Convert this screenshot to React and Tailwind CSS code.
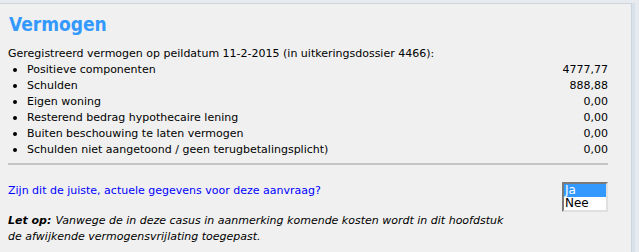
export default function App() {
  const items = [
    ['Positieve componenten', '4777,77'],
    ['Schulden', '888,88'],
    ['Eigen woning', '0,00'],
    ['Resterend bedrag hypothecaire lening', '0,00'],
    ['Buiten beschouwing te laten vermogen', '0,00'],
    ['Schulden niet aangetoond / geen terugbetalingsplicht)', '0,00'],
  ];

  return (
    <div className="w-[639px] h-[252px] bg-[#e7ebef] pt-[3px] overflow-hidden font-['DejaVu_Sans',Verdana,sans-serif] text-[11px] text-black">
      <div className="w-[635px] h-[260px] border-r-[3px] border-r-[#d9e2ea]">
        <div className="w-[632px] h-full bg-[#f0f0f0] border-t border-r border-[#cdd6df] pl-[8px] pr-[23px]">
          <h1 className="font-['DejaVu_Sans_Condensed','DejaVu_Sans',sans-serif] text-[19px] leading-[24px] font-bold text-[#3399ff] pt-[8px] pl-[1px]">Vermogen</h1>

          <div className="mt-[10px] leading-[16px]">
            Geregistreerd vermogen op peildatum 11-2-2015 (in uitkeringsdossier 4466):
          </div>
          <ul className="leading-[16px]">
            {items.map(([label, value]) => (
              <li key={label} className="flex items-center">
                <span className="w-[19px] pl-[5px] flex">
                  <span className="w-[4px] h-[4px] rounded-full bg-black" />
                </span>
                <span className="flex-1">{label}</span>
                <span>{value}</span>
              </li>
            ))}
          </ul>

          <div className="mt-[5px] border-t-2 border-[#c4c4c4]" />

          <div className="mt-[17px] flex items-start">
            <div className="flex-1 text-[#0000ff] leading-[16px] mt-[1px]">
              Zijn dit de juiste, actuele gegevens voor deze aanvraag?
            </div>
            <div className="w-[46px] border-2 border-t-[#7a7a7a] border-l-[#7a7a7a] border-r-[#e0e0e0] border-b-[#e0e0e0] bg-white text-[12px] leading-[13px]">
              <div className="bg-[#3399ff] text-white pl-[1px] h-[13px]">Ja</div>
              <div className="pl-[1px] h-[13px]">Nee</div>
            </div>
          </div>

          <div className="italic leading-[16px] w-[500px] mt-[1px]">
            <b className="mr-[4px]">Let op:</b>
            Vanwege de in deze casus in aanmerking komende kosten wordt in dit hoofdstuk de afwijkende vermogensvrijlating toegepast.
          </div>
        </div>
      </div>
    </div>
  );
}
